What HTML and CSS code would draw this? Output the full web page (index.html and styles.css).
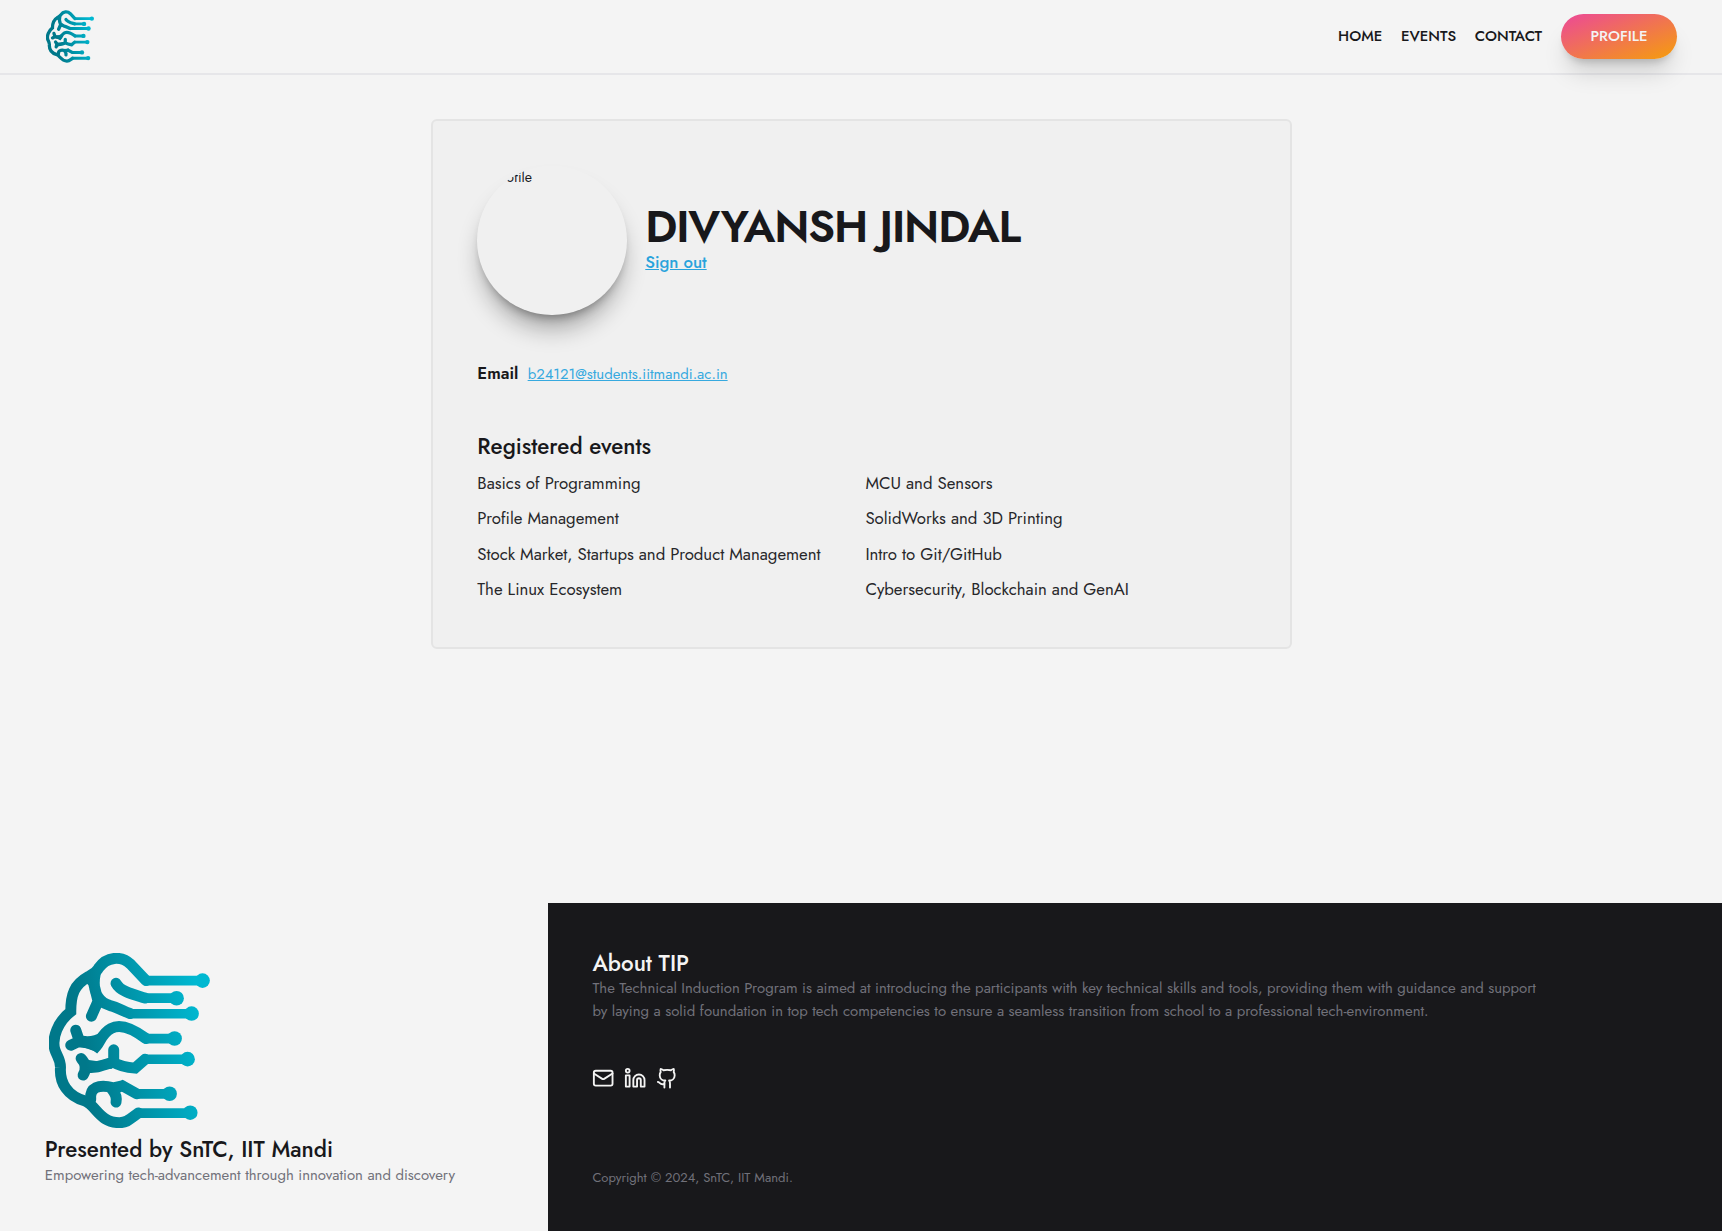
FILE: index.html
```html
<!DOCTYPE html>
<html lang="en">
<head>
<meta charset="utf-8">
<title>Profile</title>
<link rel="stylesheet" href="styles.css">
</head>
<body>
<header class="topbar">
  <svg class="logo logo-small" viewBox="57 70 483 526"><use href="#brain"/></svg>
  <nav class="nav">
    <a class="nav-link">HOME</a>
    <a class="nav-link">EVENTS</a>
    <a class="nav-link">CONTACT</a>
    <a class="nav-button">PROFILE</a>
  </nav>
</header>
<main class="main">
  <section class="card">
    <div class="person">
      <div class="avatar">Profile</div>
      <div class="person-info">
        <h1 class="name">DIVYANSH JINDAL</h1>
        <a class="signout">Sign out</a>
      </div>
    </div>
    <div class="email"><strong class="email-label">Email</strong><a class="email-link">b24121@students.iitmandi.ac.in</a></div>
    <div class="registered">
      <h2 class="heading">Registered events</h2>
      <div class="events">
        <span>Basics of Programming</span><span>MCU and Sensors</span>
        <span>Profile Management</span><span>SolidWorks and 3D Printing</span>
        <span>Stock Market, Startups and Product Management</span><span>Intro to Git/GitHub</span>
        <span>The Linux Ecosystem</span><span>Cybersecurity, Blockchain and GenAI</span>
      </div>
    </div>
  </section>
</main>
<footer class="footer">
  <div class="presenter">
    <svg class="logo logo-large" viewBox="57 70 483 526">
      <defs>
        <linearGradient id="teal" gradientUnits="userSpaceOnUse" x1="150" y1="300" x2="510" y2="240">
          <stop offset="0" stop-color="#00788a"/><stop offset="1" stop-color="#00b8d1"/>
        </linearGradient>
        <g id="brain">
          <g fill="none" stroke="url(#teal)" stroke-width="33" stroke-linecap="round">
            <path d="M348 152.500L302 104C275 78 231 79 206 115C198 130 185 135 175 141C132 165 122 195 122 246C84 275 64 325 74 360C80 380 92 390 91 415C88 460 112 500 165 515C200 530 208 579 268 580C291 580 300 569 325 551"/>
            <path d="M196 130C188 168 192 213 240 228C262 233 280 245 300 252M188 150L204 215L184 260"/>
            <path d="M258 161C272 187 312 195 345 205.500"/>
            <path d="M348 327C320 306 276 278 243 297C214 313 214 333 199 350C183 338 165 338 147 337M137 302L148 335L122 347"/>
            <path d="M345 389.500L315 416C286 414 266 408 250 398C220 406 192 420 167 412M153 387Q175 410 159 437M251 361V400"/>
            <path d="M320 493L277 469L247 481Q262 500 258 518M182 510C178 475 205 463 250 475L277 469"/>
          </g>
          <path fill="none" stroke="url(#teal)" stroke-width="29" d="M342 153H518.100M340 205.500H440M296 252.500H485M342 327.500H435M340 389.500H473M316 493.500H420M320 551.500H481"/>
          <path fill="url(#teal)" d="M145 315Q180 328 212 308L216 345L202 368L145 348ZM155 385Q205 406 246 380V418Q200 418 160 440ZM165 130L200 110L212 235L186 200L178 168L150 150Z"/>
          <g fill="url(#teal)"><circle cx="518" cy="153" r="22"/><circle cx="440" cy="206" r="22"/><circle cx="485" cy="252" r="22"/><circle cx="434" cy="327" r="22"/><circle cx="473" cy="389" r="22"/><circle cx="419" cy="493" r="22"/><circle cx="481" cy="550" r="22"/></g>
        </g>
      </defs>
      <use href="#brain"/>
    </svg>
    <h2 class="heading">Presented by SnTC, IIT Mandi</h2>
    <p class="muted">Empowering tech-advancement through innovation and discovery</p>
  </div>
  <div class="about">
    <h2 class="heading">About TIP</h2>
    <p class="muted">The Technical Induction Program is aimed at introducing the participants with key technical skills and tools, providing them with guidance and support<br>by laying a solid foundation in top tech competencies to ensure a seamless transition from school to a professional tech-environment.</p>
    <div class="social">
      <svg class="icon" viewBox="0 0 24 24"><rect x="2" y="4" width="20" height="16" rx="2"/><path d="m22 7-8.970 5.700a1.940 1.940 0 0 1-2.060 0L2 7"/></svg>
      <svg class="icon" viewBox="0 0 24 24"><path d="M16 8a6 6 0 0 1 6 6v7h-4v-7a2 2 0 0 0-4 0v7h-4v-7a6 6 0 0 1 6-6z"/><rect x="2" y="9" width="4" height="12"/><circle cx="4" cy="4" r="2"/></svg>
      <svg class="icon" viewBox="0 0 24 24"><path d="M15 22v-4a4.800 4.800 0 0 0-1-3.500c3 0 6-2 6-5.500.080-1.250-.270-2.480-1-3.500.280-1.150.280-2.350 0-3.500 0 0-1 0-3 1.500-2.640-.500-5.360-.500-8 0C6 2 5 2 5 2c-.300 1.150-.300 2.350 0 3.500A5.403 5.403 0 0 0 4 9c0 3.500 3 5.500 6 5.500-.390.490-.680 1.050-.850 1.650-.170.600-.220 1.230-.150 1.850v4"/><path d="M9 18c-4.510 2-5-2-7-2"/></svg>
    </div>
    <p class="copyright">Copyright © 2024, SnTC, IIT Mandi.</p>
  </div>
</footer>
</body>
</html>
```
FILE: styles.css
```css
* { box-sizing: border-box; }
html { font-size: 14.933px; }
body { margin: 0; min-height: 100vh; display: flex; flex-direction: column; background: #f4f4f4; color: #18181b; font-family: Jost, Lato, sans-serif; }
h1, h2, p { margin: 0; }

.topbar { height: 5rem; padding: 0 3rem; display: flex; align-items: center; justify-content: space-between; border-bottom: 2px solid #e6e6e9; }
.logo { display: block; }
.logo-small { width: 48px; height: 53px; margin-left: 1px; }
.nav { display: flex; align-items: center; gap: 1.25rem; font-size: 1rem; line-height: 1.5; font-weight: 500; }
.nav-button { width: 116.500px; height: 45px; border-radius: 23px; display: flex; align-items: center; justify-content: center; color: #f4f4f4; background: linear-gradient(to bottom right, #ec4899, #f59e0b); box-shadow: 0 18px 23px -5px rgba(0,0,0,.15), 0 7px 9px -5px rgba(0,0,0,.2); }

.main { flex: 1; padding-top: 3rem; }
.card { width: 861px; margin: 0 auto; padding: 2.950rem 3rem 3rem; border: 2px solid #e4e4e4; border-radius: 6px; background: #f0f0f0; display: flex; flex-direction: column; gap: 3rem; }
.person { display: flex; align-items: center; gap: 1.25rem; }
.avatar { width: 10rem; height: 10rem; border-radius: 50%; overflow: hidden; padding: 1.500px 0 0 17px; font-size: 14px; box-shadow: 0 18px 25px -5px rgba(0,0,0,.32), 0 7px 10px -5px rgba(0,0,0,.32); }
.name { font-size: 3rem; line-height: 1; font-weight: 600; letter-spacing: -.025em; }
.signout { display: block; font-size: 1.125rem; line-height: 1.700rem; padding-bottom: .050rem; font-weight: 500; color: #29a3dc; text-decoration: underline; }
.email { display: flex; align-items: baseline; gap: .625rem; font-size: 1.125rem; line-height: 1.75rem; }
.email-label { font-weight: 600; }
.email-link { color: #36a9df; text-decoration: underline; font-size: 1rem; }
.heading { font-size: 1.5rem; line-height: 2rem; font-weight: 500; }
.registered { display: flex; flex-direction: column; gap: .560rem; }
.events { display: grid; grid-template-columns: max-content max-content; column-gap: 3rem; row-gap: .62rem; font-size: 1.125rem; line-height: 1.75rem; color: #27272a; }

.footer { display: flex; height: 328px; }
.footer .heading { height: 2rem; padding-top: 1px; }
.presenter { width: 547.600px; padding: 3rem; display: flex; flex-direction: column; justify-content: flex-end; }
.logo-large { width: 161px; height: 175px; margin: 0 0 5.500px 4px; }
.about { flex: 1; background: #18181b; color: #f4f4f4; padding: 2.970rem 3rem 2.880rem; display: flex; flex-direction: column; }
.about .heading { padding-top: 1.600px; }
.muted { color: #71717a; font-size: 1rem; line-height: 1.5; }
.social { display: flex; gap: .625rem; margin-top: 3rem; }
.icon { width: 1.5rem; height: 1.5rem; fill: none; stroke: #f4f4f4; stroke-width: 2; stroke-linecap: round; stroke-linejoin: round; }
.copyright { margin-top: auto; font-size: .875rem; line-height: 1.25rem; color: #71717a; }
```
